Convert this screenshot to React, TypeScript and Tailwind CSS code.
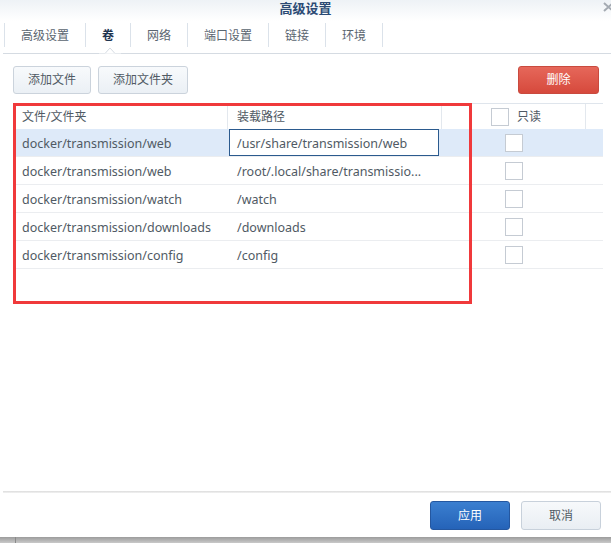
import React from "react";

const rows = [
  { a: "docker/transmission/web", b: "/usr/share/transmission/web", sel: true },
  { a: "docker/transmission/web", b: "/root/.local/share/transmissio..." },
  { a: "docker/transmission/watch", b: "/watch" },
  { a: "docker/transmission/downloads", b: "/downloads" },
  { a: "docker/transmission/config", b: "/config" },
];

const tabs = ["高级设置", "卷", "网络", "端口设置", "链接", "环境"];

function Box() {
  return <div className="w-[18px] h-[18px] border border-[#c5cbd3] bg-white" />;
}

export default function App() {
  return (
    <div
      className="relative w-[611px] h-[543px] bg-white overflow-hidden flex flex-col text-[#505a64]"
      style={{ fontFamily: '"Noto Sans", "Noto Sans CJK SC", sans-serif' }}
    >
      {/* title */}
      <div className="relative h-[21px] flex items-start justify-center pt-[1px] bg-gradient-to-b from-[#eef2f6] to-[#ffffff]">
        <span className="text-[13px] font-bold text-[#2b4a74] leading-[15px]">高级设置</span>
        <svg className="absolute right-[-3px] top-[2px]" width="11" height="10" viewBox="0 0 11 10">
          <path d="M1 1 L10 9 M10 1 L1 9" stroke="#a4aab2" strokeWidth="2" fill="none" />
        </svg>
      </div>
      {/* tabs */}
      <div className="relative ml-[3px] h-[33px] border-b border-[#d5dbe2] flex items-start pt-[2px]">
        <div className="flex ml-[1px]">
          {tabs.map((t, i) => (
            <div
              key={t}
              className={
                "h-[24px] px-4 flex items-center pt-[1px] text-[12px] border-l border-[#dbe2ea] " +
                (i === tabs.length - 1 ? "border-r " : "") +
                (i === 1 ? "text-[#1f3550] font-bold" : "text-[#5a6570]")
              }
            >
              {t}
            </div>
          ))}
        </div>
        <svg className="absolute left-[96px] bottom-[-1px]" width="22" height="8" viewBox="0 0 22 8">
          <polyline points="0,7.5 6,7.5 11,2 16,7.5 22,7.5" fill="white" stroke="#d5dbe2" strokeWidth="1" />
          <rect x="0" y="7.6" width="22" height="1" fill="white" />
        </svg>
      </div>
      {/* toolbar */}
      <div className="flex items-center mt-[12px] px-[13px] h-[28px]">
        <button className="h-[28px] px-[14px] text-[12px] rounded-[3px] border border-[#cbd3dc] bg-gradient-to-b from-[#f8fafc] to-[#ebf0f5] text-[#505a64]">
          添加文件
        </button>
        <button className="ml-[7px] h-[28px] px-[14px] text-[12px] rounded-[3px] border border-[#cbd3dc] bg-gradient-to-b from-[#f8fafc] to-[#ebf0f5] text-[#505a64]">
          添加文件夹
        </button>
        <div className="flex-1" />
        <button className="mr-[-1px] w-[81px] h-[28px] text-[12px] rounded-[3px] border border-[#c94a3e] bg-gradient-to-b from-[#e6675a] to-[#d6493c] text-white">
          删除
        </button>
      </div>
      {/* table */}
      <div className="relative mt-[9px] ml-[13px] w-[590px]">
        <div className="flex h-[26px] border-t border-[#dfe5ec] text-[12px] text-[#505a64]">
          <div className="w-[215px] pl-[9px] flex items-center border-r border-[#e3e8ee]">文件/文件夹</div>
          <div className="w-[214px] pl-[9px] flex items-center border-r border-[#e3e8ee]">装载路径</div>
          <div className="w-[144px] pl-[49px] flex items-center gap-[8px] border-r border-[#e3e8ee]">
            <Box />
            <span>只读</span>
          </div>
          <div className="flex-1" />
        </div>
        {rows.map((r, i) => (
          <div
            key={i}
            className={"flex h-[28px] border-b border-[#ebedf0] text-[12.5px] " + (r.sel ? "bg-[#deeaf9]" : "bg-white")}
          >
            <div className="w-[215px] pl-[9px] pt-[3px] flex items-center whitespace-nowrap">{r.a}</div>
            <div className="w-[214px] flex items-center">
              {r.sel ? (
                <div className="ml-[1px] w-[210px] h-[27px] border border-[#2b5a8e] bg-white flex items-center pl-[7px] pt-[3px] whitespace-nowrap">
                  {r.b}
                </div>
              ) : (
                <span className="pl-[9px] pt-[3px] whitespace-nowrap">{r.b}</span>
              )}
            </div>
            <div className="w-[144px] flex items-center justify-center pt-[1px]">
              <Box />
            </div>
            <div className="flex-1" />
          </div>
        ))}
        {/* red annotation */}
        <div className="absolute left-0 top-0 w-[459px] h-[201px] border-[3px] border-[#f0393b] pointer-events-none" />
      </div>
      <div className="flex-1" />
      {/* footer */}
      <div className="ml-[3px] h-[2px] bg-gradient-to-b from-[#dcdcdc] to-[#f2f2f2]" />
      <div className="flex justify-end items-start gap-[11px] pr-[10px] pt-[8px] h-[44px]">
        <button className="w-[80px] h-[29px] text-[12px] rounded-[3px] border border-[#2457a0] bg-gradient-to-b from-[#3b7fd0] to-[#2563b8] text-white">
          应用
        </button>
        <button className="w-[80px] h-[29px] text-[12px] rounded-[3px] border border-[#c8d1db] bg-gradient-to-b from-[#f7f9fb] to-[#e9eef3] text-[#505a64]">
          取消
        </button>
      </div>
      <div className="relative h-[6px] bg-gradient-to-b from-[#9c9c9c] to-[#c9c9c9]">
        <div className="absolute left-[15px] top-0 w-[1px] h-full bg-[#8a8a8a]" />
      </div>
    </div>
  );
}
